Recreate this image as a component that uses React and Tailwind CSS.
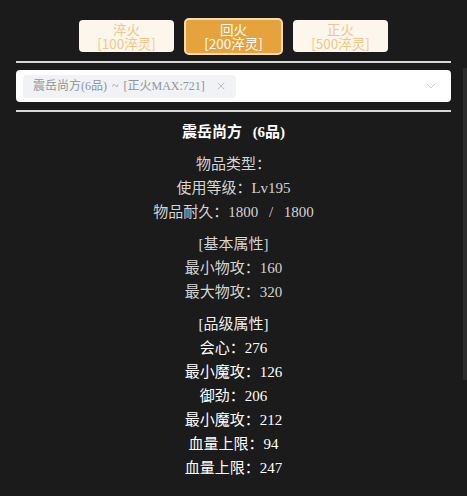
import { ChevronDown, X } from "lucide-react";

const font = { fontFamily: '"Liberation Serif", "Noto Sans CJK SC", serif' };

const buttons = [
  { name: "淬火", cost: "[100淬灵]", active: false },
  { name: "回火", cost: "[200淬灵]", active: true },
  { name: "正火", cost: "[500淬灵]", active: false },
];

const baseInfo = ["物品类型：", "使用等级：Lv195", "物品耐久：1800 / 1800"];
const basicAttrs = ["最小物攻：160", "最大物攻：320"];
const gradeAttrs = [
  "会心：276",
  "最小魔攻：126",
  "御劲：206",
  "最小魔攻：212",
  "血量上限：94",
  "血量上限：247",
];

export default function App() {
  return (
    <div className="relative min-h-[496px] w-[467px] bg-[#1b1b1b] px-4 pt-[20px]" style={font}>
      {/* scrollbar thumb */}
      <div className="absolute right-0 top-[68px] h-[312px] w-[4px] bg-[#2c2c2c]" />

      <div className="flex h-[32px] items-center justify-center gap-[10px]">
        {buttons.map((b) =>
          b.active ? (
            <button
              key={b.name}
              className="flex h-[37px] w-[99px] items-center justify-center rounded-[5px] border-2 border-[#f5dab1] bg-[#e6a23c] text-[13.5px] leading-[14px] text-white"
              style={{ fontFamily: '"Noto Sans CJK SC", sans-serif' }}
            >
              <span>
                {b.name}
                <br />
                {b.cost}
              </span>
            </button>
          ) : (
            <button
              key={b.name}
              className="flex h-[32px] w-[95px] items-center justify-center rounded-[4px] bg-[#fdf6ec] text-[13.5px] leading-[14px] text-[#f0c78a]"
              style={{ fontFamily: '"Noto Sans CJK SC", sans-serif' }}
            >
              <span>
                {b.name}
                <br />
                {b.cost}
              </span>
            </button>
          )
        )}
      </div>

      <div className="mt-[9px] h-[2px] bg-[#d6d6d6]" />

      <div className="mt-[7px] flex h-[32px] items-center rounded-[4px] bg-white pl-[7px] pr-[12px]">
        <div className="flex h-[23px] items-center gap-[10px] rounded-[4px] bg-[#f0f2f5] pl-[10px] pr-[9px] text-[12px] text-[#909399] [word-spacing:2px]">
          <span>震岳尚方(6品) ~ [正火MAX:721]</span>
          <X size={12} strokeWidth={1.5} className="text-[#a8abb2]" />
        </div>
        <ChevronDown size={16} strokeWidth={1.2} className="ml-auto text-[#c0c4cc]" />
      </div>

      <div className="mt-[8px] h-[2px] bg-[#d6d6d6]" />

      <div className="mt-[8px] flex flex-col items-center text-[15px] leading-[24px] [word-spacing:7px]">
        <div className="font-semibold text-white">震岳尚方 (6品)</div>

        <div className="mt-[8px] flex flex-col items-center text-[#d4d4d4]">
          {baseInfo.map((t) => (
            <div key={t}>{t}</div>
          ))}
        </div>

        <div className="mt-[8px] flex flex-col items-center text-[#d4d4d4]">
          <div>[基本属性]</div>
          {basicAttrs.map((t) => (
            <div key={t}>{t}</div>
          ))}
        </div>

        <div className="mt-[8px] flex flex-col items-center text-white">
          <div className="text-[#eeeeee]">[品级属性]</div>
          {gradeAttrs.map((t, i) => (
            <div key={i}>{t}</div>
          ))}
        </div>
      </div>
    </div>
  );
}
